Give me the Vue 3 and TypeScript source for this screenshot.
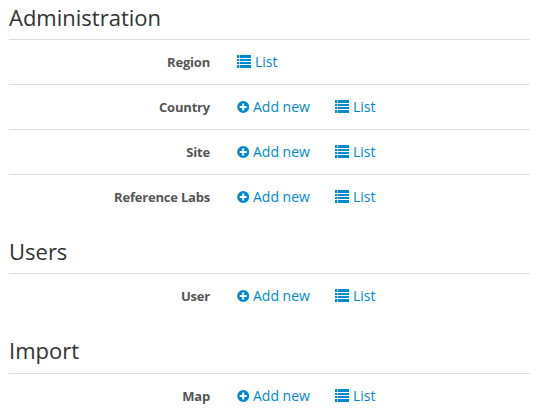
<script setup lang="ts">
interface Row {
  label: string
  canAdd: boolean
}

interface Section {
  title: string
  rows: Row[]
}

const sections: Section[] = [
  {
    title: 'Administration',
    rows: [
      { label: 'Region', canAdd: false },
      { label: 'Country', canAdd: true },
      { label: 'Site', canAdd: true },
      { label: 'Reference Labs', canAdd: true },
    ],
  },
  { title: 'Users', rows: [{ label: 'User', canAdd: true }] },
  { title: 'Import', rows: [{ label: 'Map', canAdd: true }] },
]

// Whole-pixel bars keep the small list icon sharp.
const bars = [
  { y: 0, height: 3 },
  { y: 4, height: 2 },
  { y: 7, height: 2 },
  { y: 10, height: 3 },
]
</script>

<template>
  <main class="panel">
    <section v-for="section in sections" :key="section.title" class="section">
      <h2 class="title">{{ section.title }}</h2>
      <div v-for="row in section.rows" :key="row.label" class="row">
        <span class="label">{{ row.label }}</span>
        <a v-if="row.canAdd" class="link add">
          <svg class="icon-plus" viewBox="0 0 12 12" width="12" height="12">
            <path
              fill="currentColor"
              fill-rule="evenodd"
              d="M6.2 0a6 6 0 1 1 0 12a6 6 0 0 1 0-12zM5.2 2.5V5H2.7V7H5.2V9.5H7.2V7H9.7V5H7.2V2.5z"
            />
          </svg>
          <span class="text">Add new</span>
        </a>
        <a class="link">
          <svg class="icon-list" viewBox="0 0 14 13" width="14" height="13">
            <g fill="currentColor">
              <template v-for="bar in bars" :key="bar.y">
                <rect x="0" :y="bar.y" width="2.4" :height="bar.height" rx="0.3" />
                <rect x="3" :y="bar.y" width="11" :height="bar.height" rx="0.3" />
              </template>
            </g>
          </svg>
          <span class="text">List</span>
        </a>
      </div>
    </section>
  </main>
</template>

<style>
body {
  background: #fff;
}
</style>

<style scoped>
.panel {
  box-sizing: border-box;
  height: 418px;
  overflow: hidden;
  padding: 0 10px 0 9px;
  font-family: 'Open Sans', sans-serif;
  font-size: 14px;
}

.title {
  box-sizing: border-box;
  height: 54px;
  margin: 0;
  padding-top: 17px;
  color: #333;
  font-size: 22px;
  font-weight: 400;
  line-height: 30px;
}

.section:first-child .title {
  height: 39px;
  padding-top: 2px;
}

.section:last-child .title {
  height: 55px;
}

.row {
  box-sizing: border-box;
  display: flex;
  align-items: center;
  height: 45px;
  border-top: 1px solid #ddd;
}

.label {
  width: 201px;
  margin-right: 27px;
  color: #555;
  font-size: 13px;
  font-weight: 700;
  letter-spacing: -0.2px;
  text-align: right;
}

.link {
  display: flex;
  align-items: center;
  gap: 4px;
  color: #0088cc;
}

.icon-plus {
  overflow: visible;
}

.icon-list {
  margin-bottom: 1px;
}

.text {
  line-height: 20px;
}

.add {
  width: 98px;
}
</style>
